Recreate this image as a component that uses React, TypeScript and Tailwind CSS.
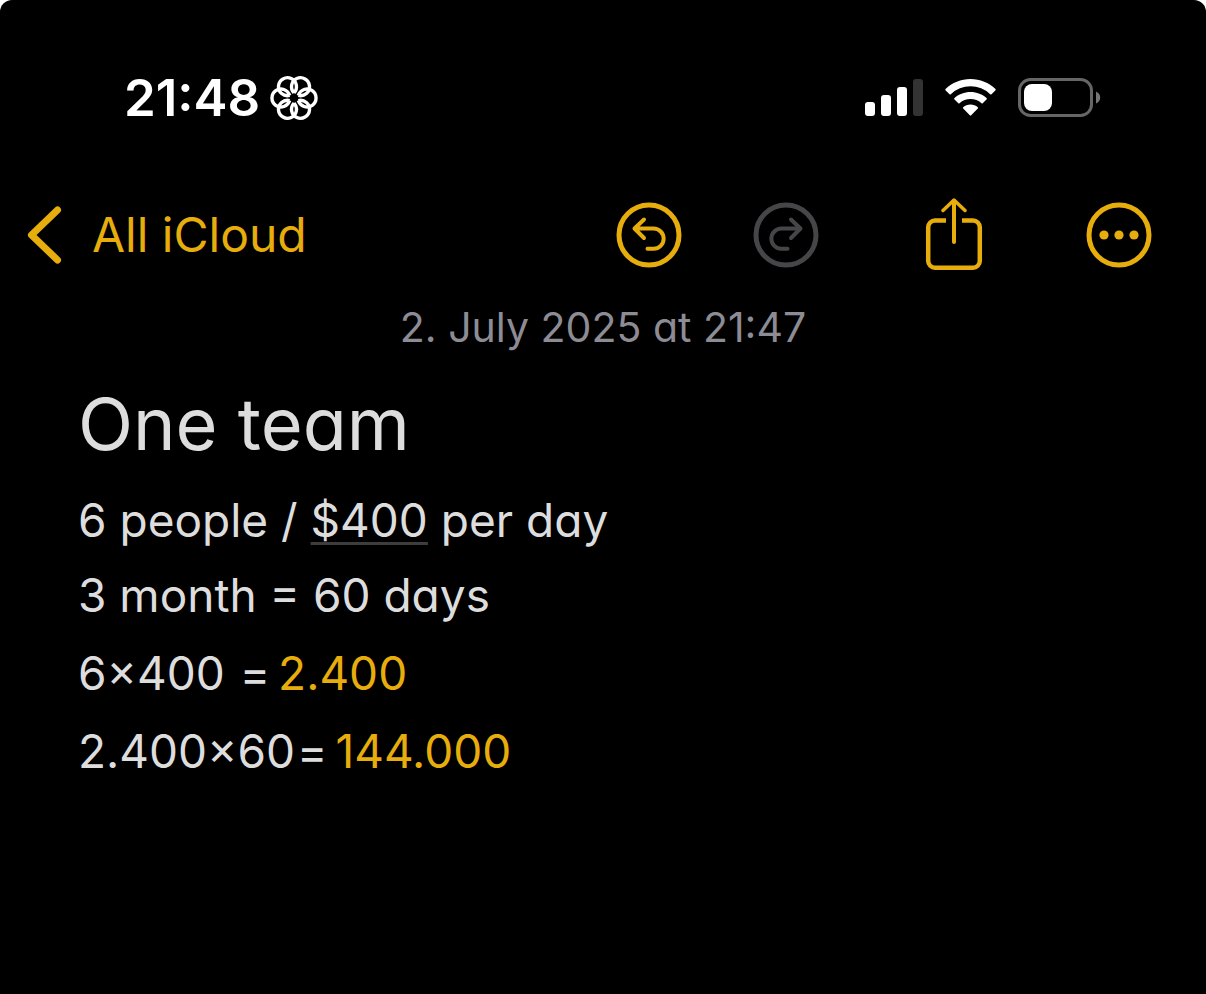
const calculations = [
  { expression: '6×400 ', result: '2.400' },
  { expression: '2.400×60', result: '144.000' }
];

const petals = [0, 60, 120, 180, 240, 300];

function FocusIcon() {
  return (
    <svg className="w-12 h-12" viewBox="-24 -24 48 48" fill="none" stroke="white" strokeWidth="3.4">
      {petals.map((angle) => (
        <path key={angle} d="M4.400 2.500A9 9 0 1 0 4.400 -2.500" transform={`rotate(${angle})`} />
      ))}
    </svg>
  );
}

function SignalIcon() {
  return (
    <svg className="w-[58px] h-10" viewBox="0 1 58 40" fill="white">
      <rect x="0" y="25" width="10" height="14" rx="3" />
      <rect x="16" y="18" width="10" height="21" rx="3" />
      <rect x="32" y="10" width="10" height="29" rx="3" />
      <rect x="48" y="2" width="10" height="37" rx="3" fill="#333333" />
    </svg>
  );
}

function WifiIcon() {
  return (
    <svg className="w-[51px] h-10" viewBox="0.5 1 51 40" fill="white">
      <path d="M26 2C35.6 2 44.4 5.7 51 12Q51.500 12.600 51 13.200L47 17.200Q46.300 17.700 45.700 17.200A28.500 28.500 0 0 0 6.300 17.200Q5.700 17.700 5 17.200L1 13.200Q.5 12.600 1 12C7.600 5.700 16.400 2 26 2Z" />
      <path d="M26 15C32.200 15 37.900 17.300 42.200 21.200Q42.700 21.700 42.200 22.300L38.200 26.300Q37.600 26.800 37 26.300A16.500 16.500 0 0 0 15 26.300Q14.400 26.800 13.800 26.300L9.800 22.300Q9.300 21.700 9.800 21.200C14.100 17.300 19.800 15 26 15Z" />
      <path d="M26 27.500C28.800 27.500 31.300 28.500 33.300 30.200Q33.900 30.800 33.300 31.400L26.700 38.300Q26 39 25.300 38.300L18.700 31.400Q18.100 30.800 18.700 30.200C20.700 28.500 23.200 27.500 26 27.500Z" />
    </svg>
  );
}

function BatteryIcon() {
  return (
    <svg className="w-[83px] h-10" viewBox="0 1 83 40" fill="none">
      <rect x="1.500" y="2.500" width="72" height="36" rx="11" stroke="#666666" strokeWidth="3" />
      <rect x="6" y="7" width="28" height="27" rx="8" fill="white" />
      <path d="M78 14.500Q82.200 16.500 82.200 20.500T78 26.500Z" fill="#777777" />
    </svg>
  );
}

function UndoIcon({ className }: { className?: string }) {
  return (
    <svg
      className={className}
      viewBox="0 0 66 66"
      fill="none"
      stroke="currentColor"
      strokeWidth="4"
      strokeLinecap="round"
      strokeLinejoin="round"
    >
      <circle cx="33" cy="33" r="30" strokeWidth="5" />
      <path d="M28 17.500L18.500 26.500L28 36M19 26.500H37.500A10 10 0 0 1 37.500 46.800H31.500" />
    </svg>
  );
}

function ShareIcon() {
  return (
    <svg
      className="w-[58px] h-[74px]"
      viewBox="0 0 58 74"
      fill="none"
      stroke="currentColor"
      strokeWidth="4.500"
      strokeLinejoin="round"
    >
      <path d="M21 22.500H10A6.800 6.800 0 0 0 3.200 29.300V63A6.800 6.800 0 0 0 10 69.700H48A6.800 6.800 0 0 0 54.800 63V29.300A6.800 6.800 0 0 0 48 22.500H37" />
      <path d="M29 44V3" strokeWidth="4" strokeLinecap="round" />
      <path d="M18 12.500L29 2L40 12.500" strokeWidth="3.500" strokeLinecap="round" />
    </svg>
  );
}

function MoreIcon() {
  return (
    <svg className="w-[66px] h-[66px]" viewBox="0 0 66 66" fill="currentColor">
      <circle cx="33" cy="33" r="30" fill="none" stroke="currentColor" strokeWidth="5" />
      <circle cx="18" cy="33" r="4.600" />
      <circle cx="33" cy="33" r="4.600" />
      <circle cx="48" cy="33" r="4.600" />
    </svg>
  );
}

function StatusBar() {
  return (
    <div className="flex items-center justify-between pt-[74px] pl-[124px] pr-[105px]">
      <div className="flex items-center gap-[10px]">
        <span className="text-[51px] leading-[48px] font-semibold text-white">21:48</span>
        <FocusIcon />
      </div>
      <div className="flex items-center gap-[22px]">
        <SignalIcon />
        <WifiIcon />
        <BatteryIcon />
      </div>
    </div>
  );
}

function Toolbar() {
  return (
    <nav className="flex items-center justify-between pt-[75px] pl-[26px] pr-[54px] text-[#e6ad0c]">
      <a href="#all-icloud" className="flex items-center gap-[30px] text-[48px] leading-[76px]">
        <svg
          className="w-9 h-[60px]"
          viewBox="0 0 36 60"
          fill="none"
          stroke="currentColor"
          strokeWidth="7"
          strokeLinecap="round"
          strokeLinejoin="round"
        >
          <path d="M31.500 5L5.500 30L31.500 55" />
        </svg>
        All iCloud
      </a>
      <div className="flex items-center">
        <button type="button" aria-label="Undo">
          <UndoIcon className="w-[66px] h-[66px]" />
        </button>
        <button type="button" aria-label="Redo" disabled className="ml-[71px] text-[#464649]">
          <UndoIcon className="w-[66px] h-[66px] -scale-x-100" />
        </button>
        <button type="button" aria-label="Share" className="ml-[106px]">
          <ShareIcon />
        </button>
        <button type="button" aria-label="More" className="ml-[103px]">
          <MoreIcon />
        </button>
      </div>
    </nav>
  );
}

function Note() {
  return (
    <main className="px-[78px] text-[46px] leading-[78px] text-[#dddddd]">
      <p className="pt-6 text-center text-[41px] leading-[60px] text-[#8d8c94]">
        2. July 2025 at 21:47
      </p>
      <h1 className="pt-[15px] pb-2 text-[72px] leading-[104px]">One team</h1>
      <p className="leading-[72px]">
        6 people /{' '}
        <a href="#currency" className="underline decoration-[#3d3d3d] decoration-3 underline-offset-[5px] [text-decoration-skip-ink:none]">
          $400
        </a>{' '}
        per day
      </p>
      <p>3 month = 60 days</p>
      {calculations.map((calc) => (
        <p key={calc.result} className="whitespace-pre">
          {calc.expression}
          <span className="ml-0.5 mr-2">=</span>
          <span className="text-[#e6ad0c]">{calc.result}</span>
        </p>
      ))}
    </main>
  );
}

export default function App() {
  return (
    <div className="min-h-screen bg-white">
      <div className="min-h-screen rounded-t-xl bg-black font-['Inter',sans-serif] [font-feature-settings:'cv11']">
        <StatusBar />
        <Toolbar />
        <Note />
      </div>
    </div>
  );
}
